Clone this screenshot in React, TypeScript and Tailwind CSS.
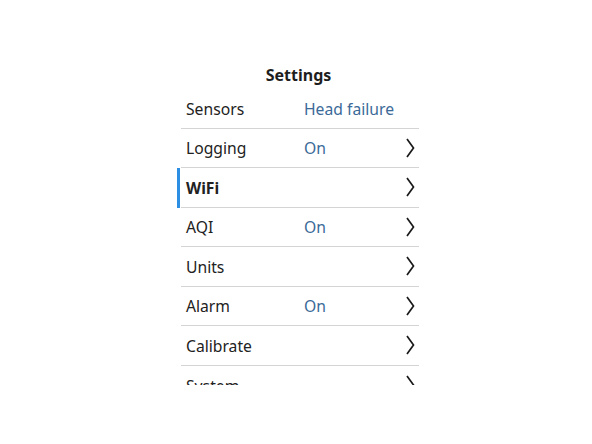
const rows: { label: string; value?: string; chevron: boolean; active?: boolean }[] = [
  { label: "Sensors", value: "Head failure", chevron: false },
  { label: "Logging", value: "On", chevron: true },
  { label: "WiFi", chevron: true, active: true },
  { label: "AQI", value: "On", chevron: true },
  { label: "Units", chevron: true },
  { label: "Alarm", value: "On", chevron: true },
  { label: "Calibrate", chevron: true },
  { label: "System", chevron: true },
];

function Chevron() {
  return (
    <svg width="10" height="20" viewBox="0 0 10 20" className="shrink-0">
      <polyline points="2,1 8.5,10 2,19" fill="none" stroke="#1a1a1a" strokeWidth="1.7" strokeLinejoin="miter" />
    </svg>
  );
}

export default function App() {
  return (
    <div className="w-[592px] h-[444px] bg-white flex justify-center" style={{ fontFamily: '"Noto Sans", "Open Sans", sans-serif' }}>
      <div className="w-[243px] ml-[5px] mt-[60px] h-[325px] overflow-hidden flex flex-col">
        <div className="h-[29px] shrink-0 flex items-center justify-center text-[16px] font-bold text-[#1e1e1e]">Settings</div>
        {rows.map((r, i) => (
          <div key={r.label} className="relative h-[39.5px] shrink-0 flex flex-col">
            {r.active && <div className="absolute left-0 top-0 bottom-0 w-[3px] bg-[#2d8fe3]" />}
            <div className="flex-1 flex items-center pl-[9px] pr-[5px]">
              <span className={`w-[118px] pt-[3px] text-[15.7px] text-[#222] ${r.active ? "font-bold" : ""}`}>{r.label}</span>
              <span className="flex-1 pt-[3px] text-[15.7px] text-[#3b6a98]">{r.value}</span>
              {r.chevron && <Chevron />}
            </div>
            {i < rows.length - 1 && <div className="h-px ml-[4px] mr-[1px] bg-[#d4d4d4]" />}
          </div>
        ))}
      </div>
    </div>
  );
}
